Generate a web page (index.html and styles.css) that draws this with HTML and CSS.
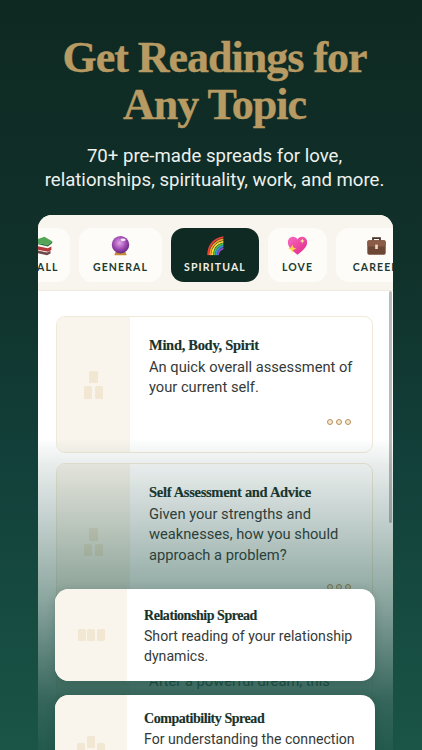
FILE: index.html
```html
<!DOCTYPE html>
<html lang="en">
<head>
<meta charset="utf-8">
<title>Get Readings for Any Topic</title>
<link rel="stylesheet" href="styles.css">
</head>
<body>
<main class="screen">
  <header class="hero">
    <h1>Get Readings for<br>Any Topic</h1>
    <p>70+ pre-made spreads for love,<br>relationships, spirituality, work, and more.</p>
  </header>
  <section class="frame">
    <nav class="tabs">
      <div class="tab tab-all">
        <svg class="emoji" viewBox="0 0 24 24"><path d="M2 17l14 3 4-2v3l-4 2-14-3z" fill="#6f4a4a"/><path d="M2 12l15 3 4-2v4l-4 2-15-3z" fill="#b23a3a"/><path d="M1 6l12-4 9 5-5 4-14-2z" fill="#55a558"/><path d="M3 9l14 2 5-4v2l-5 4-14-3z" fill="#2f7238"/></svg>
        <span>ALL</span>
      </div>
      <div class="tab tab-general">
        <svg class="emoji" viewBox="0 0 24 24"><defs><radialGradient id="ball" cx=".45" cy=".4" r=".7"><stop offset="0" stop-color="#e3a7e8"/><stop offset=".55" stop-color="#9a45ad"/><stop offset="1" stop-color="#4f1f70"/></radialGradient></defs><path d="M6 20l2-3h8l2 3 1 3H5z" fill="#c98a35"/><circle cx="12" cy="11" r="10" fill="url(#ball)"/><ellipse cx="15" cy="5.500" rx="3" ry="1.600" fill="#f6e4f8"/></svg>
        <span>GENERAL</span>
      </div>
      <div class="tab tab-active">
        <svg class="emoji" viewBox="0 0 24 24" fill="none" stroke-width="2.100"><path d="M3.500 23C4 12 10 4.500 21 2.500" stroke="#e8413a"/><path d="M5.700 23C6.300 13.500 11.500 7 21 5" stroke="#f39a2d"/><path d="M8 23C8.500 15 13 9 21 7.500" stroke="#f4dc3a"/><path d="M10.200 23C10.800 16.500 15 11.500 21 10" stroke="#4fb84d"/><path d="M12.500 23C13 18 16.500 14 21 12.500" stroke="#3a8ee0"/><path d="M14.700 23C15 19.500 17.500 16.500 21 15" stroke="#8a4fc0"/></svg>
        <span>SPIRITUAL</span>
      </div>
      <div class="tab tab-love">
        <svg class="emoji" viewBox="0 0 24 24"><defs><linearGradient id="heart" x1="0" y1="0" x2="1" y2="1"><stop offset="0" stop-color="#f76bc0"/><stop offset="1" stop-color="#e0258a"/></linearGradient></defs><path d="M12 22.500C6 18 1 14 1 8 1 4.500 3.800 2 7 2c2.200 0 4 1.200 5 3 1-1.800 2.800-3 5-3 3.200 0 6 2.500 6 6 0 6-5 10-11 14.500z" fill="url(#heart)"/><path d="M6 11l1.400 3.300 3.300 1.300-3.300 1.300L6 20.300l-1.400-3.400-3.300-1.300 3.300-1.300z" fill="#fbd545"/><path d="M17.500 4l.8 2 1.900.8-1.900.8-.8 2-.8-2-1.900-.8 1.900-.8z" fill="#fde2a0"/></svg>
        <span>LOVE</span>
      </div>
      <div class="tab tab-career">
        <svg class="emoji" viewBox="0 0 24 24"><path d="M8 7V3.500h8V7" fill="none" stroke="#4a3026" stroke-width="2"/><rect x="1.500" y="6" width="21" height="16.500" rx="2" fill="#6d4636"/><rect x="1.500" y="6" width="21" height="7" rx="2" fill="#8a5c48"/><rect x="10.500" y="11" width="3" height="5" fill="#e8d9c4"/></svg>
        <span>CAREER</span>
      </div>
    </nav>

    <div class="list">
      <article class="card card-one">
        <div class="thumb">
          <div class="cards-pyramid"><i></i><div class="pair"><i></i><i></i></div></div>
        </div>
        <div class="body">
          <h2>Mind, Body, Spirit</h2>
          <p>An quick overall assessment of your current self.</p>
          <div class="dots"><b></b><b></b><b></b></div>
        </div>
      </article>
      <article class="card card-two">
        <div class="thumb">
          <div class="cards-pyramid"><i></i><div class="pair"><i></i><i></i></div></div>
        </div>
        <div class="body">
          <h2>Self Assessment and Advice</h2>
          <p>Given your strengths and weaknesses, how you should approach a problem?</p>
          <div class="dots"><b></b><b></b><b></b></div>
        </div>
      </article>
      <article class="card card-three">
        <div class="thumb"></div>
        <div class="body body-cut">
          <p>After a powerful dream, this</p>
        </div>
      </article>
    </div>
    <div class="scrollbar"></div>
    <div class="fade"></div>
  </section>

  <article class="float float-one">
    <div class="thumb">
      <div class="pair row-three"><i></i><i></i><i></i></div>
    </div>
    <div class="body">
      <h2>Relationship Spread</h2>
      <p>Short reading of your relationship dynamics.</p>
    </div>
  </article>
  <article class="float float-two">
    <div class="thumb">
      <div class="pair row-compat"><i></i><i class="up"></i><i></i></div>
    </div>
    <div class="body">
      <h2>Compatibility Spread</h2>
      <p>For understanding the connection between two people.</p>
    </div>
  </article>
</main>
</body>
</html>
```
FILE: styles.css
```css
* { box-sizing: border-box; }
html, body { margin: 0; height: 100%; }
body { overflow: hidden; }

.screen {
  position: relative;
  width: 422px;
  height: 750px;
  overflow: hidden;
  background: linear-gradient(180deg, #0e2922 0%, #10312a 35%, #12403a 62%, #1a5547 100%);
  display: flex;
  flex-direction: column;
}

.hero {
  padding: 34px 0 0 7px;
  text-align: center;
  height: 215px;
  flex: none;
}
.hero h1 {
  margin: 0;
  font-family: "Liberation Serif", serif;
  font-weight: 700;
  font-size: 44px;
  line-height: 47px;
  color: #b89a63;
  letter-spacing: -1px;
  -webkit-text-stroke: .4px #b89a63;
}
.hero p {
  margin: 16px 0 0;
  font-family: Roboto, sans-serif;
  font-size: 18.600px;
  line-height: 24px;
  color: #eef1ee;
}

.frame {
  position: relative;
  flex: none;
  width: 355px;
  height: 560px;
  margin-left: 38px;
  background: #fff;
  border-radius: 14px 14px 0 0;
  overflow: hidden;
}

.tabs {
  height: 76px;
  background: #f8f5ee;
  border-bottom: 1px solid #efeae0;
  padding-top: 13px;
  display: flex;
  gap: 9px;
  align-items: flex-start;
  overflow: hidden;
}
.tab {
  flex: none;
  height: 54px;
  border-radius: 13px;
  background: #fdfcf8;
  display: flex;
  flex-direction: column;
  align-items: center;
  padding-top: 7px;
  font-family: Lato, sans-serif;
  font-weight: 700;
  font-size: 10.500px;
  letter-spacing: 1.100px;
  color: #1c3a33;
}
.tab span { margin-top: 5px; line-height: 13px; white-space: nowrap; }
.emoji { width: 21px; height: 21px; flex: none; }
.tab-all { width: 32px; overflow: hidden; border-radius: 0 13px 13px 0; align-items: flex-start; }
.tab-all .emoji { margin-left: -5px; }
.tab-all span { margin-left: -1px; }
.tab-general { width: 83px; }
.tab-active { width: 88px; background: #0e2a23; color: #f1efe8; }
.tab-love { width: 59px; }
.tab-career { width: 80px; }

.list {
  padding: 25px 20px 0 18px;
  display: flex;
  flex-direction: column;
  gap: 10px;
}

.card {
  display: flex;
  border: 1px solid #f0e9da;
  border-radius: 9px;
  overflow: hidden;
  background: #fff;
  flex: none;
}
.card-one { height: 137px; }
.card-two { height: 158px; }
.card-three { height: 130px; }

.thumb {
  flex: none;
  display: flex;
  align-items: center;
  justify-content: center;
  background: #f9f5ec;
}
.card .thumb { width: 73px; }
.card .body { flex: 1; padding: 17px 8px 0 19px; position: relative; }
.card .body-cut { padding-top: 39px; }

h2 {
  margin: 0;
  font-family: "Liberation Serif", serif;
  font-weight: 700;
  font-size: 14.500px;
  line-height: 22.500px;
  color: #16322b;
  letter-spacing: -.3px;
  -webkit-text-stroke: .15px #16322b;
  white-space: nowrap;
}
.body p {
  margin: 0;
  font-family: Roboto, sans-serif;
  font-size: 14.700px;
  line-height: 20.500px;
  color: #343a38;
}

.dots {
  position: absolute;
  right: 21px;
  top: 102px;
  display: flex;
  gap: 3px;
}
.card-two .dots { top: 120px; }
.dots b {
  width: 6px;
  height: 6px;
  border-radius: 50%;
  border: 1.800px solid #b98f57;
  background: #f3e8d6;
}

.cards-pyramid { display: flex; flex-direction: column; align-items: center; gap: 3px; }
.pair { display: flex; gap: 2.500px; }
.cards-pyramid i, .pair i {
  display: block;
  width: 8.500px;
  height: 12.500px;
  border-radius: 1.500px;
  background: #f1e7d2;
}

.scrollbar {
  position: absolute;
  right: 1px;
  top: 76px;
  width: 3px;
  height: 232px;
  background: #b9bcbc;
  border-radius: 2px;
}

.fade {
  position: absolute;
  inset: 223px 0 0 0;
  background: linear-gradient(180deg,
    rgba(24, 72, 62, 0) 0%,
    rgba(24, 72, 62, .1) 8%,
    rgba(24, 74, 63, .28) 26%,
    rgba(24, 76, 64, .5) 48%,
    rgba(25, 80, 68, .88) 78%,
    rgba(26, 84, 71, 1) 100%);
}

.float {
  position: absolute;
  left: 55px;
  width: 320px;
  display: flex;
  background: #fff;
  border-radius: 14px;
  overflow: hidden;
  box-shadow: 0 2px 10px rgba(10, 40, 34, .18);
}
.float-one { top: 589px; height: 92px; }
.float-two { top: 695px; height: 92px; }
.float .thumb { width: 72px; }
.float .body { flex: 1; padding: 16px 0 0 17px; }
.float-two .body { padding-top: 13px; }
.float h2 { font-size: 14px; letter-spacing: -.45px; line-height: 21px; }
.float .body p { line-height: 20px; font-size: 14.100px; }

.row-three { gap: 1.500px; }
.row-three i { width: 8px; height: 12px; }
.row-compat { gap: 2px; margin-top: 16px; }
.row-compat i { width: 8px; height: 12px; }
.row-compat .up { transform: translateY(-7px); }
```
